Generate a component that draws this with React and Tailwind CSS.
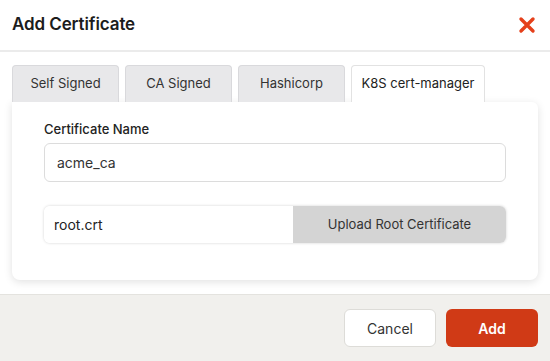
import React, { useState } from 'react';

const tabs = ['Self Signed', 'CA Signed', 'Hashicorp', 'K8S cert-manager'];

const CloseIcon = () => (
  <svg width="18" height="18" viewBox="0 0 18 18">
    <path d="M3 3 L15 15 M15 3 L3 15" stroke="#e5401b" strokeWidth="3.4" strokeLinecap="round" />
  </svg>
);

const App = () => {
  const [active, setActive] = useState(3);

  return (
    <div className="w-[550px] h-[361px] bg-white flex flex-col font-['Inter',sans-serif] text-[#222]">
      {/* header */}
      <div className="h-[52px] shrink-0 flex items-center justify-between pl-3 pr-[14px] border-b-2 border-[#ebebeb]">
        <h1 className="text-[17px] font-semibold tracking-[-0.1px] text-[#1c1c1c]">Add Certificate</h1>
        <button className="flex items-center justify-center">
          <CloseIcon />
        </button>
      </div>

      {/* body */}
      <div className="flex-1 px-3 pt-[13px]">
        <div className="flex gap-[6px]">
          {tabs.map((t, i) => (
            <button
              key={t}
              onClick={() => setActive(i)}
              className={
                i === active
                  ? 'h-[37px] w-[134px] bg-white border border-b-0 border-[#e2e2e2] rounded-t-[4px] text-[13px] text-[#222] -mb-px relative z-10'
                  : 'h-[37px] w-[107px] bg-[#e8e8ea] border border-b-0 border-[#d9d9dc] rounded-t-[4px] text-[13px] text-[#333]'
              }
            >
              {t}
            </button>
          ))}
        </div>
        <div className="bg-white rounded-b-[8px] rounded-tr-[6px] shadow-[0_2px_8px_rgba(0,0,0,0.12)] h-[178px] px-8 pt-[18px]">
          <label className="block text-[13px] leading-[18px] font-medium text-[#222] mb-[5px]">Certificate Name</label>
          <div className="h-[39px] w-[462px] border border-[#dcdcdc] rounded-[6px] flex items-center px-3 text-[14px] text-[#333]">
            acme_ca
          </div>
          <div className="mt-[24px] h-[37px] w-[462px] rounded-[6px] flex overflow-hidden shadow-[0_0_3px_rgba(0,0,0,0.18)]">
            <div className="w-[249px] bg-white flex items-center px-[10px] text-[14px] text-[#222]">root.crt</div>
            <div className="flex-1 bg-[#d4d4d4] flex items-center justify-center text-[13px] text-[#333]">
              Upload Root Certificate
            </div>
          </div>
        </div>
      </div>

      {/* footer */}
      <div className="h-[67px] shrink-0 bg-[#f1f0ed] border-t border-[#e4e3df] flex items-center justify-end gap-[10px] pr-3">
        <button className="w-[92px] h-[38px] bg-white border border-[#dddcd8] rounded-[6px] text-[14px] text-[#333]">
          Cancel
        </button>
        <button className="w-[92px] h-[38px] bg-[#d03a16] rounded-[6px] text-[14px] font-semibold text-white">
          Add
        </button>
      </div>
    </div>
  );
};

export default App;
